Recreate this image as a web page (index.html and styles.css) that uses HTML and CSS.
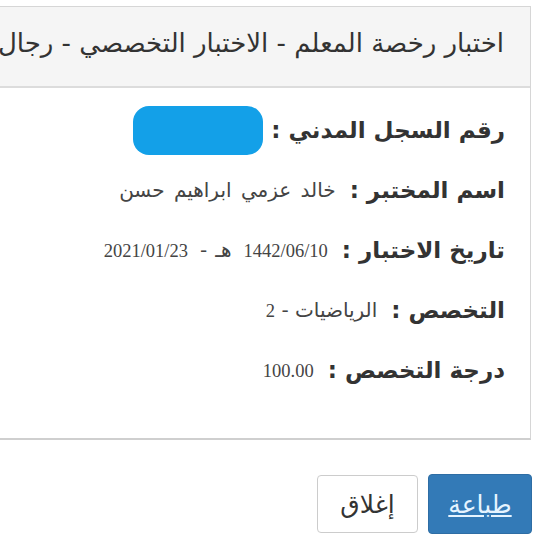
FILE: index.html
```
<!DOCTYPE html>
<html lang="ar" dir="rtl">
<head>
<meta charset="utf-8">
<link rel="stylesheet" href="styles.css">
</head>
<body>
<div class="panel">
  <div class="panel-heading">اختبار رخصة المعلم - الاختبار التخصصي - رجال</div>
  <div class="panel-body">
    <div class="row"><span class="label">رقم السجل المدني :</span><span class="masked"></span></div>
    <div class="row"><span class="label">اسم المختبر :</span><span class="value name">خالد عزمي ابراهيم حسن</span></div>
    <div class="row"><span class="label">تاريخ الاختبار :</span><span class="value"><span class="num">1442/06/10</span><span class="hijri">هـ</span><span class="dash">-</span><span class="num">2021/01/23</span></span></div>
    <div class="row"><span class="label">التخصص :</span><span class="value">الرياضيات - <span class="num">2</span></span></div>
    <div class="row"><span class="label">درجة التخصص :</span><span class="value"><span class="num">100.00</span></span></div>
  </div>
</div>
<div class="footer">
  <button class="btn btn-primary">طباعة</button>
  <button class="btn btn-default">إغلاق</button>
</div>
</body>
</html>
```
FILE: styles.css
```
html, body {
  margin: 0;
  padding: 0;
  overflow: hidden;
  background: #ffffff;
}
body {
  direction: rtl;
  font-family: "DejaVu Sans", sans-serif;
  color: #333;
  width: 540px;
  height: 540px;
}
.panel {
  margin: 6px 9px 0 -40px;
  border: 1px solid #d6d6d6;
  border-bottom: 2px solid #cfcfcf;
  overflow: hidden;
  background: #fff;
}
.panel-heading {
  background: #f5f5f5;
  border-bottom: 2px solid #dcdcdc;
  height: 79px;
  line-height: 72px;
  padding-right: 26px;
  font-size: 26px;
  white-space: nowrap;
  overflow: hidden;
  color: #333;
}
.panel-body {
  padding: 12px 25px 38px 0;
}
.row {
  height: 60px;
  display: flex;
  align-items: center;
  gap: 14px;
  white-space: nowrap;
}
.label {
  font-weight: bold;
  font-size: 23px;
  color: #333;
}
.value {
  font-family: "DejaVu Sans", sans-serif;
  font-size: 20px;
  color: #444;
}
.name {
  word-spacing: 3px;
}
.num {
  font-family: "Liberation Serif", serif;
  font-size: 18.5px;
}
.hijri {
  display: inline-block;
  margin: 0 12px 0 8px;
}
.dash {
  display: inline-block;
  margin-left: 12px;
}
.masked {
  display: inline-block;
  width: 130px;
  height: 49px;
  border-radius: 16px;
  background: #13a0e8;
  margin-right: -6px;
}
.footer {
  display: flex;
  gap: 10px;
  padding: 34px 8px 0 0;
}
.btn {
  font-family: "DejaVu Sans", sans-serif;
  font-size: 25px;
  border-radius: 4px;
  height: 60px;
  padding: 0;
  cursor: pointer;
}
.btn-primary {
  width: 104px;
  background: #337ab7;
  border: 1px solid #2e6da4;
  color: #e6f4ff;
  text-decoration: underline;
}
.btn-default {
  width: 101px;
  height: 58px;
  margin-top: 1px;
  background: #fff;
  border: 1px solid #cccccc;
  color: #333;
}
```
